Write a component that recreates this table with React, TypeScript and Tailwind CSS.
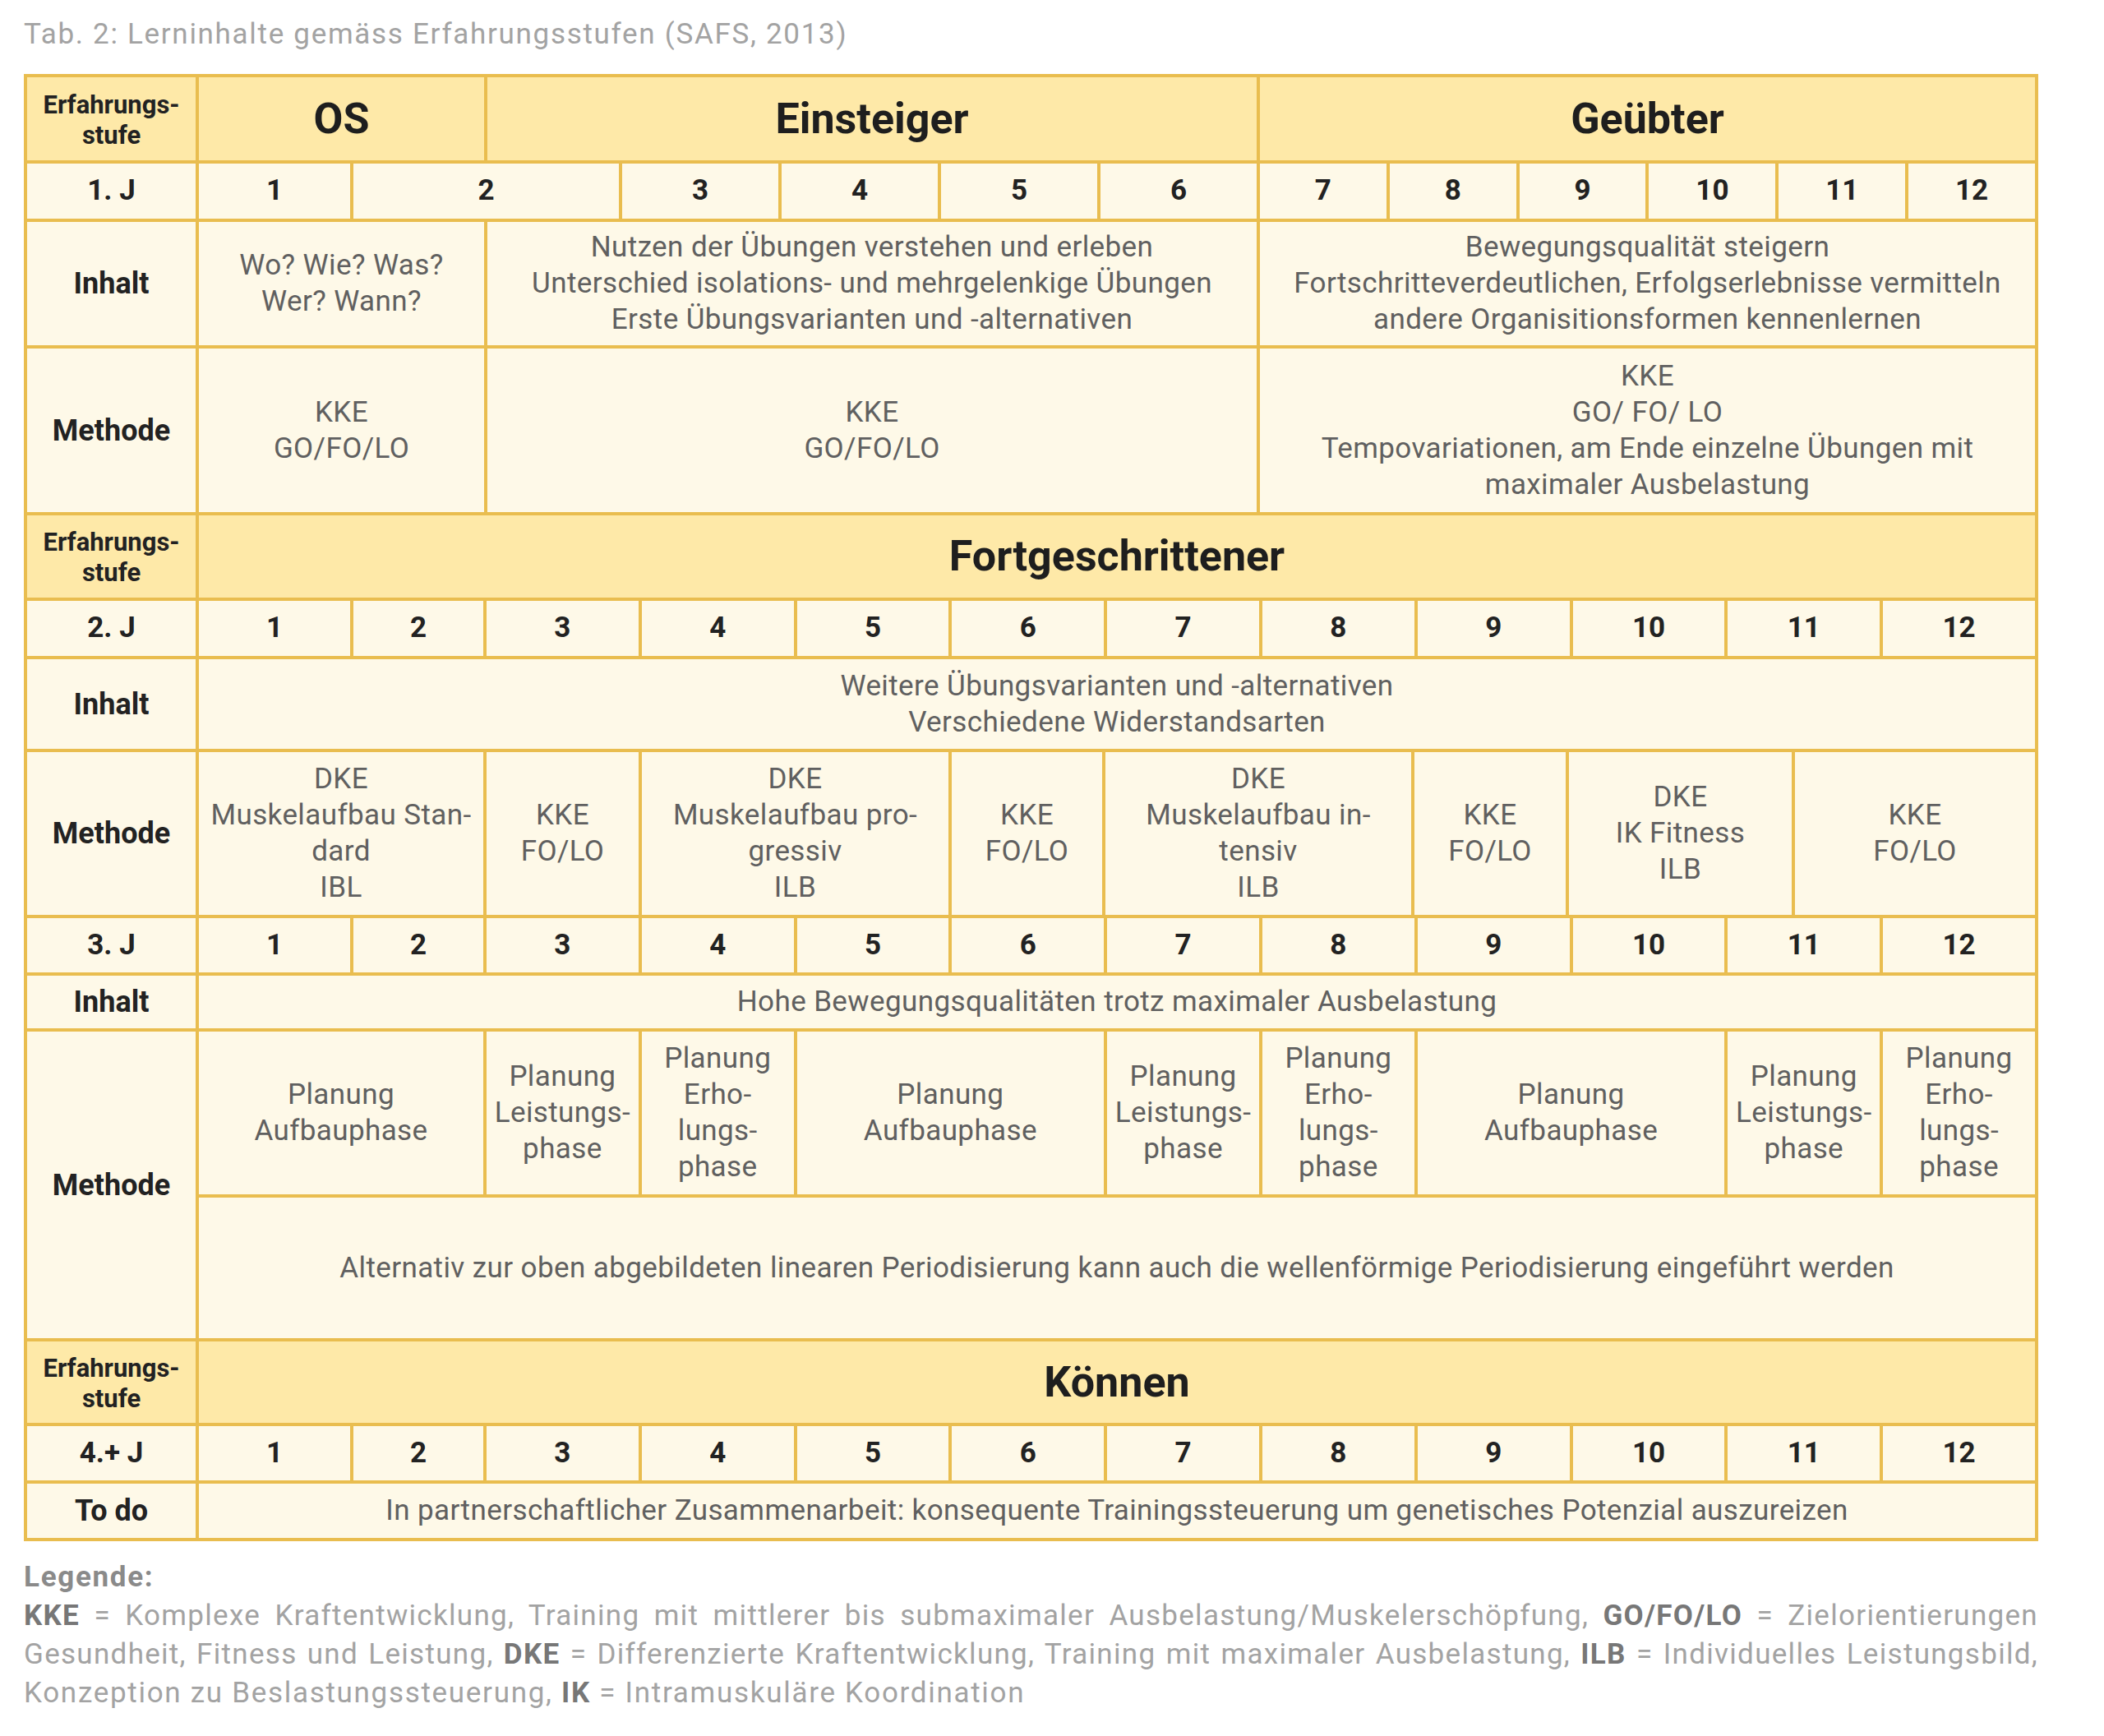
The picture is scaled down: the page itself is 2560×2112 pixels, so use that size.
import React from "react";

const FONT = { fontFamily: "Roboto, 'Liberation Sans', Arial, sans-serif" };

function Lines({ lines }: { lines: string[] }) {
  return (
    <>
      {lines.map((l, i) => (
        <span key={i} className="block whitespace-nowrap">
          {l}
        </span>
      ))}
    </>
  );
}

function Label({ children, yellow = false, className = "" }: { children: React.ReactNode; yellow?: boolean; className?: string }) {
  return (
    <div
      className={`flex items-center justify-center text-center font-bold text-[36px] leading-[44px] text-[#222222] ${
        yellow ? "bg-[#fee9a8]" : "bg-[#fef9e8]"
      } ${className}`}
    >
      {children}
    </div>
  );
}

function Stufe() {
  return (
    <div className="flex flex-col items-center justify-center text-center font-bold text-[31px] leading-[37px] text-[#222222] bg-[#fee9a8] pt-[2px]">
      <span>Erfahrungs-</span>
      <span>stufe</span>
    </div>
  );
}

function Head({ children, className = "" }: { children: React.ReactNode; className?: string }) {
  return (
    <div className={`flex items-center justify-center text-center font-bold text-[52px] text-[#1e1e1e] bg-[#fee9a8] ${className}`}>
      {children}
    </div>
  );
}

function Num({ n, className = "" }: { n: string; className?: string }) {
  return (
    <div className={`flex items-center justify-center font-bold text-[35px] text-[#222222] bg-[#fef9e8] ${className}`}>
      {n}
    </div>
  );
}

function Body({ lines, className = "" }: { lines: string[]; className?: string }) {
  return (
    <div
      className={`flex flex-col items-center justify-center text-center text-[35px] tracking-[0.4px] leading-[44px] text-[#606060] bg-[#fef9e8] ${className}`}
    >
      <Lines lines={lines} />
    </div>
  );
}

const nums = ["1", "2", "3", "4", "5", "6", "7", "8", "9", "10", "11", "12"];

export default function App() {
  return (
    <div className="bg-white w-[2560px] min-h-[2112px] pl-[29px] pt-[18px]" style={FONT}>
      <div className="text-[35px] tracking-[1.7px] leading-[47px] text-[#a3a3a3] mb-[25px]">
        Tab. 2: Lerninhalte gemäss Erfahrungsstufen (SAFS, 2013)
      </div>

      <div className="w-[2451px] bg-[#e9bd4f] p-[4px] flex flex-col gap-[4px]">
        {/* Section 1 */}
        <div className="grid gap-[4px] grid-cols-[205px_184px_159px_160px_190px_190px_190px_190px_repeat(6,minmax(0,1fr))] grid-rows-[101px_67px_150px_199px]">
          <Stufe />
          <Head className="col-span-2">OS</Head>
          <Head className="col-span-5">Einsteiger</Head>
          <Head className="col-span-6">Geübter</Head>

          <Num n="1. J" />
          <Num n="1" />
          <Num n="2" className="col-span-2" />
          {["3", "4", "5", "6", "7", "8", "9", "10", "11", "12"].map((n) => (
            <Num key={n} n={n} />
          ))}

          <Label>Inhalt</Label>
          <Body className="col-span-2" lines={["Wo? Wie? Was?", "Wer? Wann?"]} />
          <Body
            className="col-span-5"
            lines={[
              "Nutzen der Übungen verstehen und erleben",
              "Unterschied isolations- und mehrgelenkige Übungen",
              "Erste Übungsvarianten und -alternativen",
            ]}
          />
          <Body
            className="col-span-6"
            lines={[
              "Bewegungsqualität steigern",
              "Fortschritteverdeutlichen, Erfolgserlebnisse vermitteln",
              "andere Organisitionsformen kennenlernen",
            ]}
          />

          <Label>Methode</Label>
          <Body className="col-span-2" lines={["KKE", "GO/FO/LO"]} />
          <Body className="col-span-5" lines={["KKE", "GO/FO/LO"]} />
          <Body
            className="col-span-6"
            lines={["KKE", "GO/ FO/ LO", "Tempovariationen, am Ende einzelne Übungen mit", "maximaler Ausbelastung"]}
          />
        </div>

        {/* Sections 2-4 */}
        <div className="grid gap-[4px] grid-cols-[205px_184px_158px_repeat(10,minmax(0,1fr))] grid-rows-[100px_67px_109px_198px_66px_64px_198px_171px_99px_66px_66px]">
          <Stufe />
          <Head className="col-span-12">Fortgeschrittener</Head>

          <Num n="2. J" />
          {nums.map((n) => (
            <Num key={"a" + n} n={n} />
          ))}

          <Label>Inhalt</Label>
          <Body className="col-span-12" lines={["Weitere Übungsvarianten und -alternativen", "Verschiedene Widerstandsarten"]} />

          <Label>Methode</Label>
          <div className="col-span-12 grid gap-[4px] grid-cols-[346px_185px_373px_183px_372px_184px_271px_minmax(0,1fr)]">
            <Body lines={["DKE", "Muskelaufbau Stan-", "dard", "IBL"]} />
            <Body lines={["KKE", "FO/LO"]} />
            <Body lines={["DKE", "Muskelaufbau pro-", "gressiv", "ILB"]} />
            <Body lines={["KKE", "FO/LO"]} />
            <Body lines={["DKE", "Muskelaufbau in-", "tensiv", "ILB"]} />
            <Body lines={["KKE", "FO/LO"]} />
            <Body lines={["DKE", "IK Fitness", "ILB"]} />
            <Body lines={["KKE", "FO/LO"]} />
          </div>

          <Num n="3. J" />
          {nums.map((n) => (
            <Num key={"b" + n} n={n} />
          ))}

          <Label>Inhalt</Label>
          <Body className="col-span-12" lines={["Hohe Bewegungsqualitäten trotz maximaler Ausbelastung"]} />

          <Label className="row-span-2">Methode</Label>
          <Body className="col-span-2" lines={["Planung", "Aufbauphase"]} />
          <Body lines={["Planung", "Leistungs-", "phase"]} />
          <Body lines={["Planung", "Erho-", "lungs-", "phase"]} />
          <Body className="col-span-2" lines={["Planung", "Aufbauphase"]} />
          <Body lines={["Planung", "Leistungs-", "phase"]} />
          <Body lines={["Planung", "Erho-", "lungs-", "phase"]} />
          <Body className="col-span-2" lines={["Planung", "Aufbauphase"]} />
          <Body lines={["Planung", "Leistungs-", "phase"]} />
          <Body lines={["Planung", "Erho-", "lungs-", "phase"]} />
          <Body
            className="col-span-12"
            lines={["Alternativ zur oben abgebildeten linearen Periodisierung kann auch die wellenförmige Periodisierung eingeführt werden"]}
          />

          <Stufe />
          <Head className="col-span-12">Können</Head>

          <Num n="4.+ J" />
          {nums.map((n) => (
            <Num key={"c" + n} n={n} />
          ))}

          <Label>To do</Label>
          <Body
            className="col-span-12"
            lines={["In partnerschaftlicher Zusammenarbeit: konsequente Trainingssteuerung um genetisches Potenzial auszureizen"]}
          />
        </div>
      </div>

      <div className="w-[2451px] mt-[20px] text-[35px] leading-[47px] text-[#a3a3a3]">
        <div className="font-bold tracking-[1.7px] text-[#8a8a8a]">Legende:</div>
        <div className="text-justify [text-align-last:justify] whitespace-nowrap tracking-[1.3px]">
          <b className="text-[#777777]">KKE</b> = Komplexe Kraftentwicklung, Training mit mittlerer bis submaximaler Ausbelastung/Muskelerschöpfung,{" "}
          <b className="text-[#777777]">GO/FO/LO</b> = Zielorientierungen
        </div>
        <div className="text-justify [text-align-last:justify] whitespace-nowrap tracking-[1.3px]">
          Gesundheit, Fitness und Leistung, <b className="text-[#777777]">DKE</b> = Differenzierte Kraftentwicklung, Training mit maximaler Ausbelastung,{" "}
          <b className="text-[#777777]">ILB</b> = Individuelles Leistungsbild,
        </div>
        <div className="whitespace-nowrap tracking-[1.7px]">
          Konzeption zu Beslastungssteuerung, <b className="text-[#777777]">IK</b> = Intramuskuläre Koordination
        </div>
      </div>
    </div>
  );
}
